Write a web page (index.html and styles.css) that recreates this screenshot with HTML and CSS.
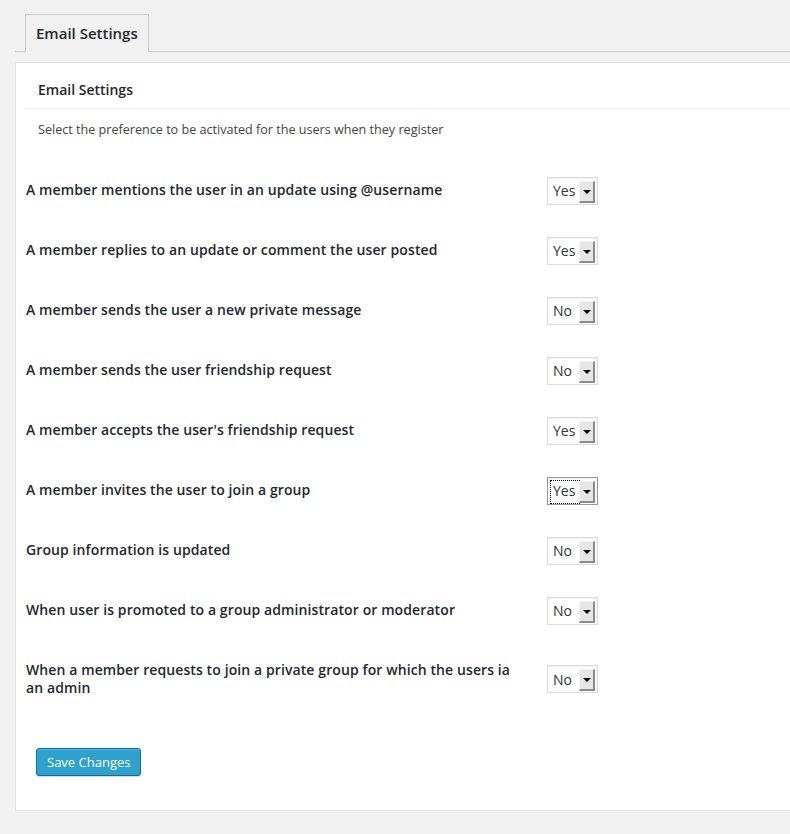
FILE: index.html
```html
<!DOCTYPE html>
<html lang="en">
<head>
  <meta charset="UTF-8">
  <meta name="viewport" content="width=device-width, initial-scale=1.0" />
  <title>Email Settings</title>
  <link rel="stylesheet" href="styles.css">
</head>
<body>
  <div class="wrap">
    <h2 class="nav-tab-wrapper">
      <a class="nav-tab nav-tab-active" href="#">Email Settings</a>
    </h2>

    <form class="panel">
      <div class="section">
        <h3 class="section-title">Email Settings</h3>
        <p class="description">Select the preference to be activated for the users when they register</p>

        <table class="form-table">
          <tr>
            <th>A member mentions the user in an update using @username</th>
            <td><span class="select"><select><option selected>Yes</option><option>No</option></select><span class="select-btn"></span></span></td>
          </tr>
          <tr>
            <th>A member replies to an update or comment the user posted</th>
            <td><span class="select"><select><option selected>Yes</option><option>No</option></select><span class="select-btn"></span></span></td>
          </tr>
          <tr>
            <th>A member sends the user a new private message</th>
            <td><span class="select"><select><option>Yes</option><option selected>No</option></select><span class="select-btn"></span></span></td>
          </tr>
          <tr>
            <th>A member sends the user friendship request</th>
            <td><span class="select"><select><option>Yes</option><option selected>No</option></select><span class="select-btn"></span></span></td>
          </tr>
          <tr>
            <th>A member accepts the user's friendship request</th>
            <td><span class="select"><select><option selected>Yes</option><option>No</option></select><span class="select-btn"></span></span></td>
          </tr>
          <tr>
            <th>A member invites the user to join a group</th>
            <td><span class="select is-focused"><select><option selected>Yes</option><option>No</option></select><span class="select-btn"></span></span></td>
          </tr>
          <tr>
            <th>Group information is updated</th>
            <td><span class="select"><select><option>Yes</option><option selected>No</option></select><span class="select-btn"></span></span></td>
          </tr>
          <tr>
            <th>When user is promoted to a group administrator or moderator</th>
            <td><span class="select"><select><option>Yes</option><option selected>No</option></select><span class="select-btn"></span></span></td>
          </tr>
          <tr>
            <th>When a member requests to join a private group for which the users ia an admin</th>
            <td><span class="select"><select><option>Yes</option><option selected>No</option></select><span class="select-btn"></span></span></td>
          </tr>
        </table>
      </div>

      <p class="submit">
        <button type="submit" class="button-primary">Save Changes</button>
      </p>
    </form>
  </div>
</body>
</html>
```

FILE: styles.css
```css
html {
  overflow: hidden;
}
body {
  margin: 0;
  background: #f1f1f1;
  font-family: "Open Sans", sans-serif;
  font-size: 13px;
  color: #444;
}
.wrap {
  width: 820px;
  padding: 14px 0 0 15px;
}

/* tabs */
.nav-tab-wrapper {
  display: flex;
  margin: 0;
  padding-left: 10px;
  border-bottom: 1px solid #ccc;
}
.nav-tab {
  margin-bottom: -1px;
  padding: 6px 10px;
  border: 1px solid #ccc;
  border-bottom-color: #f1f1f1;
  background: #f1f1f1;
  color: #23282d;
  font-size: 15px;
  font-weight: 600;
  line-height: 24px;
  text-decoration: none;
}

/* panel */
.panel {
  margin-top: 10px;
  padding: 10px 10px 0;
  background: #fff;
  border: 1px solid #e5e5e5;
  box-shadow: 0 1px 1px rgba(0,0,0,0.04);
}
.section-title {
  margin: 0;
  padding: 7px 12px 8px;
  border-bottom: 1px solid #eee;
  color: #23282d;
  font-size: 14px;
  font-weight: 600;
  line-height: 20px;
}
.description {
  margin: 11px 12px 0;
  font-size: 12.6px;
  line-height: 19.5px;
}

/* settings rows */
.form-table {
  margin-top: 21px;
  border-collapse: collapse;
}
.form-table th {
  width: 495px;
  padding: 20px 16px 20px 0;
  vertical-align: top;
  text-align: left;
  color: #23282d;
  font-size: 14px;
  font-weight: 600;
  line-height: 1.35;
  letter-spacing: 0.1px;
}
.form-table td {
  padding: 15px 10px;
  vertical-align: middle;
}

.select {
  position: relative;
  display: inline-block;
  margin: 1px 0;
  vertical-align: middle;
}
.select select {
  display: block;
  width: 51px;
  height: 28px;
  margin: 0;
  padding: 0 0 0 5px;
  border: 1px solid #ddd;
  border-radius: 0;
  background: #fff;
  box-shadow: inset 0 1px 2px rgba(0,0,0,0.07);
  color: #333;
  font-family: "Open Sans", sans-serif;
  font-size: 14px;
  appearance: none;
  -webkit-appearance: none;
  outline: none;
}
.select-btn {
  position: absolute;
  top: 4px;
  right: 3px;
  width: 13px;
  height: 19px;
  background: #e6e6e6;
  border-left: 1px solid #f4f4f4;
  border-top: 1px solid #f4f4f4;
  border-right: 2px solid #8c8c8c;
  border-bottom: 2px solid #8c8c8c;
  pointer-events: none;
}
.select-btn::after {
  content: "";
  position: absolute;
  left: 3px;
  top: 8px;
  border-left: 4px solid transparent;
  border-right: 4px solid transparent;
  border-top: 4px solid #000;
}
.select.is-focused select {
  border-color: #999;
}
.select.is-focused::before {
  content: "";
  position: absolute;
  left: 3px;
  top: 3px;
  width: 28px;
  height: 22px;
  border: 1px dotted #000;
  pointer-events: none;
}

/* submit */
.submit {
  margin: 0;
  padding: 30px 10px 34px;
}
.button-primary {
  height: 28px;
  padding: 0 10px;
  border: 1px solid #0074a2;
  border-radius: 3px;
  background: #2ea2cc;
  box-shadow: inset 0 1px 0 rgba(120,200,230,0.5), 0 1px 0 rgba(0,0,0,0.15);
  color: #fff;
  font-family: "Open Sans", sans-serif;
  font-size: 13px;
  line-height: 26px;
  cursor: pointer;
}
```
